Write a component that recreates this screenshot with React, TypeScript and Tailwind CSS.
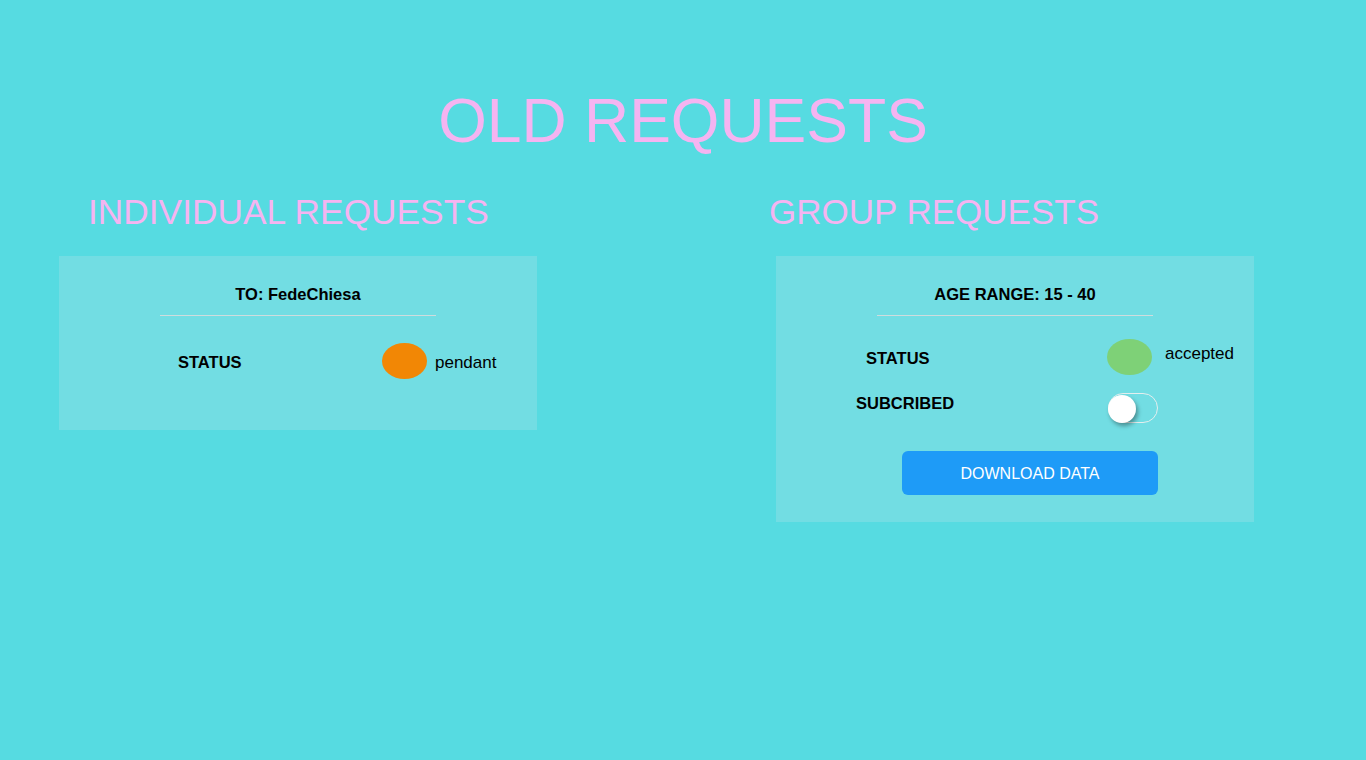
const font = { fontFamily: '"Liberation Sans", Arial, sans-serif' };

function CardHeader({ text }: { text: string }) {
  return (
    <div className="flex flex-col items-center">
      <p className="text-[16.5px] font-bold leading-[20px] text-black">{text}</p>
      <div className="mt-[11.5px] h-px w-[276px] bg-[#cfdcdd]" />
    </div>
  );
}

function Toggle({ on }: { on: boolean }) {
  return (
    <div className="relative h-[30px] w-[50px] rounded-full border border-[#e4eeee]">
      <div
        className={
          "absolute top-[1px] h-[28px] w-[28px] rounded-full bg-white shadow-[2px_3px_4px_rgba(0,0,0,0.35)] " +
          (on ? "right-[-1px]" : "left-[-1px]")
        }
      />
    </div>
  );
}

export default function App() {
  return (
    <main className="min-h-screen bg-[#56dbe1] pt-[89px]" style={font}>
      <h1 className="text-center text-[62.5px] leading-[63px] text-[#f5b4f1]">OLD REQUESTS</h1>

      <div className="mt-[42px] grid grid-cols-2">
        {/* individual */}
        <section className="flex flex-col">
          <h2 className="ml-[88px] text-[35.3px] leading-[35px] text-[#f5b4f1]">INDIVIDUAL REQUESTS</h2>
          <div className="ml-[59px] mt-[27px] h-[174px] w-[478px] bg-[#72dde3] pt-[27.5px]">
            <CardHeader text="TO: FedeChiesa" />
            <div className="mt-[27px] flex items-start pl-[119px]">
              <span className="mt-[9px] w-[204px] text-[16.5px] font-bold leading-[20px] text-black">STATUS</span>
              <span className="h-[36px] w-[45px] rounded-[50%] bg-[#f28705]" />
              <span className="ml-[8px] mt-[10px] text-[17px] leading-[20px] text-black">pendant</span>
            </div>
          </div>
        </section>

        {/* group */}
        <section className="flex flex-col">
          <h2 className="ml-[86px] text-[35px] leading-[35px] text-[#f5b4f1]">GROUP REQUESTS</h2>
          <div className="ml-[93px] mt-[27px] h-[266px] w-[478px] bg-[#72dde3] pt-[27.5px]">
            <CardHeader text="AGE RANGE: 15 - 40" />
            <div className="mt-[23px] flex items-start pl-[90px]">
              <span className="mt-[9px] w-[241px] text-[16.5px] font-bold leading-[20px] text-black">STATUS</span>
              <span className="h-[36px] w-[45px] rounded-[50%] bg-[#7ed177]" />
              <span className="ml-[13px] mt-[5px] text-[17px] leading-[20px] text-black">accepted</span>
            </div>
            <div className="mt-[18px] flex items-start pl-[80px]">
              <span className="w-[252px] text-[16.5px] font-bold leading-[20px] text-black">SUBCRIBED</span>
              <Toggle on={false} />
            </div>
            <button className="ml-[126px] mt-[28px] flex h-[44px] w-[256px] items-center justify-center rounded-[6px] bg-[#1e9bf7] pt-[2px] text-[16px] text-white">
              DOWNLOAD DATA
            </button>
          </div>
        </section>
      </div>
    </main>
  );
}
